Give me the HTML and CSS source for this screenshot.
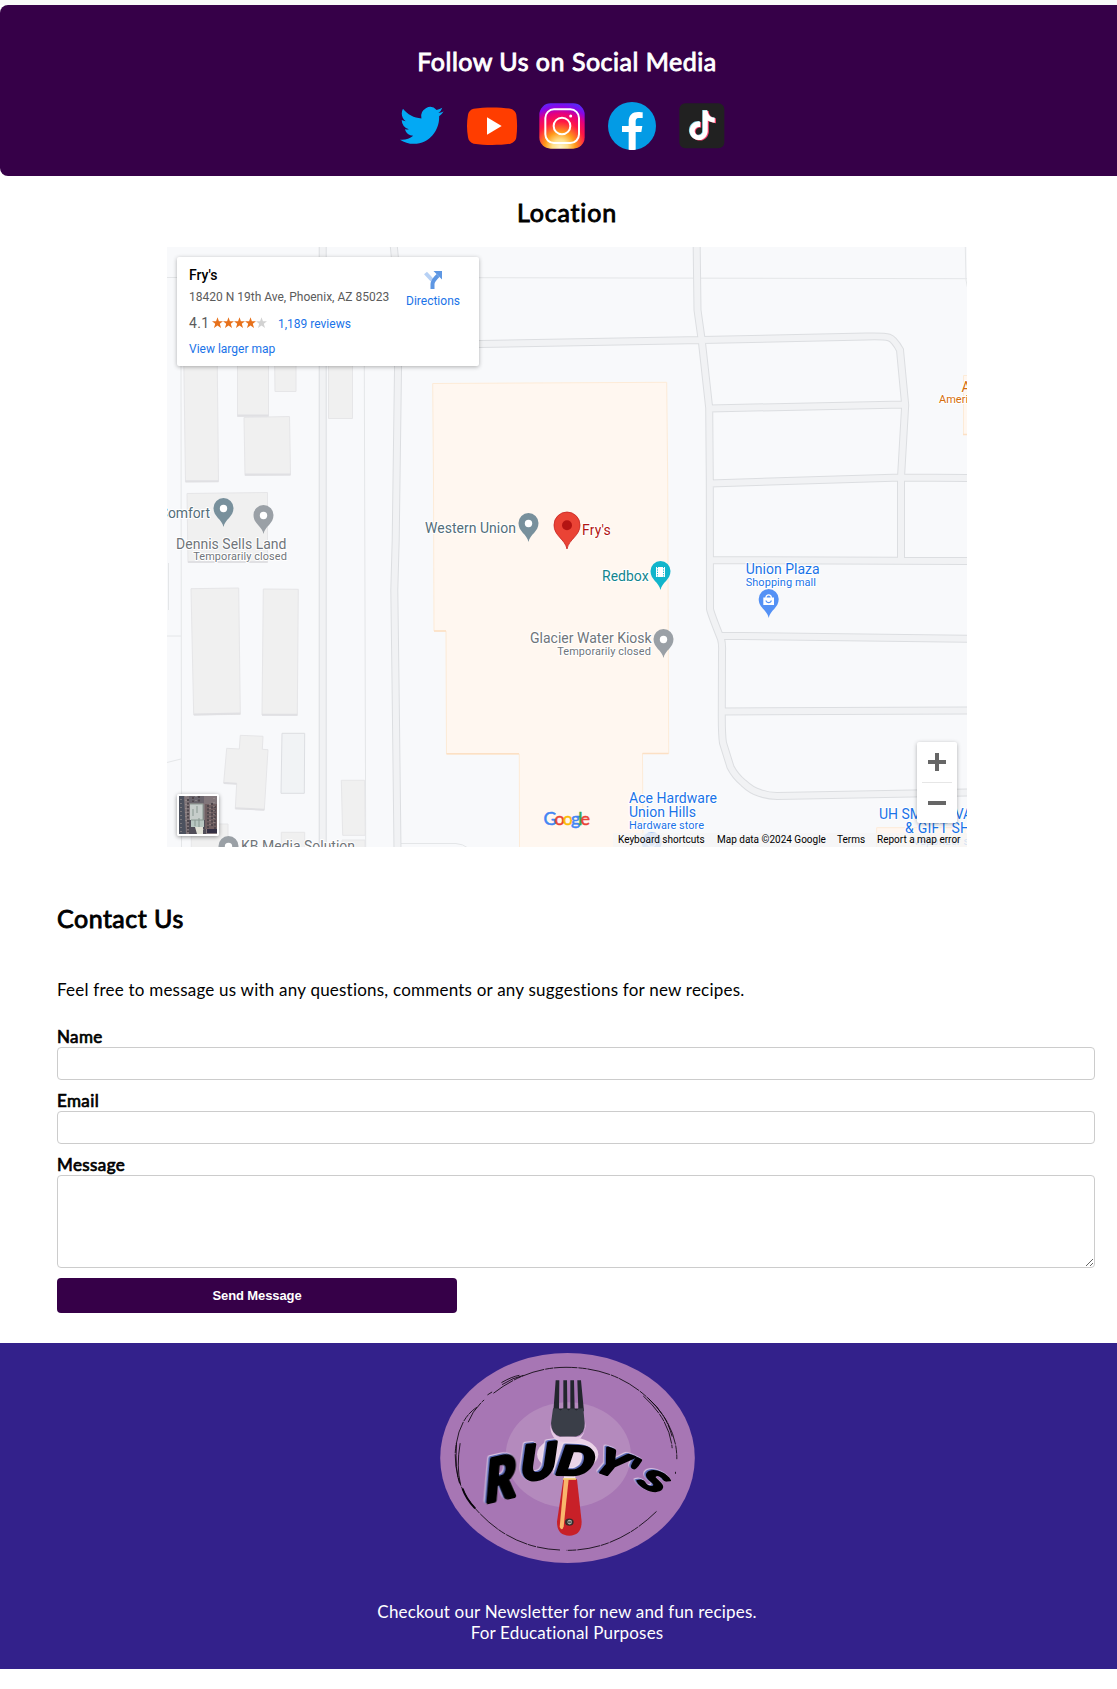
FILE: index.html
```html
<!DOCTYPE html>
<html lang="en">
<head>
<meta charset="utf-8">
<title>Rudy's</title>
<link rel="stylesheet" href="styles.css">
</head>
<body>
<div class="page">
  <section class="social">
    <h2 class="social-title"><span>Follow Us on Social Media</span></h2>
    <div class="social-icons">
      <svg viewBox="49 210 156 156"><path transform="translate(61 218.5) scale(5.450 5.65)" fill="#03a9f4" d="M23.953 4.57a10 10 0 01-2.825.775 4.958 4.958 0 002.163-2.723c-.951.555-2.005.959-3.127 1.184a4.92 4.92 0 00-8.384 4.482C7.69 8.095 4.067 6.13 1.64 3.162a4.822 4.822 0 00-.666 2.475c0 1.71.87 3.213 2.188 4.096a4.904 4.904 0 01-2.228-.616v.06a4.923 4.923 0 003.946 4.827 4.996 4.996 0 01-2.212.085 4.936 4.936 0 004.604 3.417 9.867 9.867 0 01-6.102 2.105c-.39 0-.779-.023-1.17-.067a13.995 13.995 0 007.557 2.209c9.053 0 13.998-7.496 13.998-13.985 0-.21 0-.42-.015-.63A9.935 9.935 0 0024 4.59z"/></svg>
      <svg viewBox="258 210 156 156"><path fill="#ff3d00" d="M409 322c-1 9-9 17-18 19-33 5-76 5-110 0-9-2-16-10-17-19-4-24-4-44 0-68 1-9 8-16 17-18 34-5 77-5 110 0 9 2 17 9 18 18 3 24 3 44 0 68z"/><path fill="#fff" d="M321 262v52l44-26z"/></svg>
      <svg viewBox="468 210 156 156">
        <defs>
          <radialGradient id="igWarm" cx="540" cy="352" r="142" gradientUnits="userSpaceOnUse"><stop offset="0" stop-color="#fff3c4"/><stop offset=".16" stop-color="#ffe08a"/><stop offset=".32" stop-color="#ff9b1a"/><stop offset=".55" stop-color="#ff1744"/><stop offset=".72" stop-color="#e6007e"/><stop offset=".86" stop-color="#8a06e8"/><stop offset="1" stop-color="#4a32ff"/></radialGradient>
        </defs>
        <rect x="478" y="220" width="136" height="136" rx="34" fill="url(#igWarm)"/>
        <g fill="none" stroke="#fff" stroke-width="6"><rect x="496" y="238" width="101" height="101" rx="26"/><circle cx="546" cy="288" r="25"/></g><circle cx="572" cy="258" r="4.500" fill="#fff"/>
      </svg>
      <svg viewBox="678 210 156 156"><circle cx="756" cy="288" r="72" fill="#039be5"/><path fill="#fff" d="M746 359v-53h-20v-18h20v-12c0-21 11-30 28-30 8 0 12 1 14 1v17h-11c-9 0-10 5-10 13v11h20l-3 18h-17v53c-7 1-14 1-21 0z"/></svg>
      <svg viewBox="888 210 156 156">
        <defs><path id="note" d="M12.525.02c1.31-.02 2.61-.01 3.91-.02.08 1.530.63 3.090 1.750 4.170 1.120 1.110 2.700 1.620 4.240 1.790v4.030c-1.440-.05-2.890-.35-4.200-.97-.57-.26-1.100-.59-1.620-.93-.01 2.920.01 5.840-.02 8.750-.08 1.400-.54 2.790-1.350 3.940-1.310 1.920-3.580 3.170-5.910 3.210-1.430.08-2.860-.31-4.080-1.030-2.020-1.190-3.440-3.370-3.650-5.710-.02-.5-.03-1-.01-1.490.18-1.900 1.120-3.720 2.580-4.960 1.660-1.440 3.980-2.130 6.150-1.720.02 1.480-.04 2.960-.04 4.440-.99-.32-2.150-.23-3.020.37-.63.41-1.110 1.040-1.360 1.750-.21.51-.15 1.070-.14 1.610.24 1.640 1.820 3.020 3.500 2.870 1.120-.01 2.190-.66 2.770-1.610.19-.33.4-.67.41-1.060.1-1.790.06-3.570.07-5.360.01-4.030-.01-8.050.02-12.070z"/></defs>
        <rect x="898" y="220" width="135" height="135" rx="18" fill="#212121"/>
        <use href="#note" fill="#81d4e8" transform="translate(921 240) scale(3.650 3.700)"/><use href="#note" fill="#ff4571" transform="translate(926 243) scale(3.650 3.700)"/><use href="#note" fill="#fff" transform="translate(923.500 241.500) scale(3.600 3.700)"/>
      </svg>
    </div>
  </section>

  <section class="location">
    <h2 class="location-title"><span>Location</span></h2>
    <div class="map">
      <svg class="map-canvas" viewBox="167 247 800 600">
        <defs>
          <g id="roads">
            <path d="M322.700 240V850M393.200 240L398 290V370L395.700 540 394.300 590 395.500 680 397.500 850M398 345.500L480 344 701.700 340 866 336.500Q884 336 889 337.500 894 339 900 350L905.200 405 901 477.500V560M696.600 240L697.500 310 701.700 340 709.200 408 709.800 480 710 609Q711 614 721 639 722.500 644 722 652L721.800 713Q721.700 735 723 743L730.500 767Q735 776 743.500 783 752 791 760 793 768 796 777 796L970 792.500M709.300 408.500L903.500 404.500M710 483.500L901 477.500 970 478M710 560L970 561M720 635.700L970 638.700M722 711.500L970 710.500"/>
          </g>
          <g id="pin"><path d="M0 29C-1.500 21-10 19-10 10A10 10 0 0 1 10 10C10 19 1.500 21 0 29z"/></g>
        </defs>
        <rect x="167" y="247" width="800" height="600" fill="#f8f9fb"/>
        <g fill="none" stroke="#e4e6e8">
          <path d="M167 277.500L480 277.700 967 278.700M181 366L181.500 847M364.300 366L365.700 847M167 636H181M167 762.500L181 759M168.500 563V610M400.500 843.500H456Q463 844 468 848M965.300 247L966 280 968 290"/>
        </g>
        <g class="buildings">
          <path d="M183.500 340H217L218.500 481.500 185.500 482zM237.500 350H268.500V416.500H237.500zM274.500 350H296V391.500H275zM244 417.500L289.500 416.500 290.500 475 245 475.500zM328.500 350H352.500V418.500H328.500zM187 493.500L267.500 492.500V562.500H188zM191 588.700L238.700 588 240.300 714.300 193.700 715zM263.300 589L298.300 589.300 297.300 715.300 262 715z"/>
          <path d="M240.300 735.300L263 736.300 262.300 749.300 268 749.700 264.300 810 235.300 808.700 236.700 783.700 223.700 783 226.700 748.300 239.300 749zM341.300 780.300H364.700L365.300 835.300H342.700zM281.300 832.300H304.700V850H281.300zM191.300 824H228V850H191.300zM342 840H365V850H342z"/>
          <path fill="#f1f3f5" stroke="#dcdee2" d="M282 733.300H304.700L304.300 793.300H281z"/>
          <path fill="none" stroke="#e0e0e3" stroke-width="2" d="M185.500 481.300H218.500M237.500 415.500H268.500M245 474.500H290.500M188 562H267.500M194 714.500L240.300 713.500M262 714.700H297.300M223.700 783L236.700 783.700M235.300 808.300L264.300 809.700"/>
        </g>
        <use href="#roads" fill="none" stroke="#dcdee1" stroke-width="8"/>
        <use href="#roads" fill="none" stroke="#f1f2f4" stroke-width="6"/>
        <g fill="#fff7f0" stroke="#fdebd7">
          <path d="M432.700 383.500L666.700 382.300 667.700 480 668.700 753.500H642.500L643 850H519.500L519.300 754H446.500L446 631H434L433.500 480z"/>
          <path d="M963.500 375.500H970V434.500H963.500zM876.700 827.700H970V850H876.700z"/>
          <path fill="none" stroke="#fce0c4" stroke-width="1.500" d="M446.500 753.700H519M642.500 753.500H668.500M434 631H446M963 434.500H968"/>
        </g>
        <use href="#pin" x="223.500" y="498" fill="#78909c"/><circle cx="223.500" cy="508.500" r="3.700" fill="#fff"/>
        <use href="#pin" x="263.500" y="505" fill="#9aa0a6"/><circle cx="263.500" cy="515.500" r="3.700" fill="#fff"/>
        <use href="#pin" x="528.500" y="513" fill="#78909c"/><circle cx="528.500" cy="523.500" r="3.700" fill="#fff"/>
        <use href="#pin" x="663.500" y="629" fill="#9aa0a6"/><circle cx="663.500" cy="639.500" r="3.700" fill="#fff"/>
        <use href="#pin" x="228.500" y="836" fill="#9aa0a6"/><circle cx="228.500" cy="846.500" r="3.700" fill="#fff"/>
        <use href="#pin" x="651.700" y="832" fill="#a9c6f7"/><circle cx="651.700" cy="842.500" r="4" fill="none" stroke="#e8f0fd" stroke-width="1.500"/>
        <use href="#pin" x="660.500" y="561" fill="#12b5cb"/><path d="M656 567H665V577H656z" fill="#fff"/><path d="M657.500 567V577M663.500 567V577" stroke="#12b5cb" stroke-dasharray="1.200 1.200"/>
        <use href="#pin" x="768.700" y="589" fill="#5491f5"/><path d="M763.300 597.500H774V605H763.300z" fill="#fff"/><path d="M766 598V597A2.700 2.700 0 0 1 771.300 597V598" fill="none" stroke="#fff" stroke-width="1.300"/><path d="M766 600.500A2.700 2.700 0 0 0 771.300 600.500" fill="none" stroke="#5491f5" stroke-width="1.200"/>
        <path d="M567 549C565 539 554 536 554 525A13 13 0 0 1 580 525C580 536 569 539 567 549z" fill="#ea4335" stroke="#c5221f" stroke-width=".8"/><circle cx="567" cy="525.300" r="5" fill="#b31412"/>
        <g class="labels">
          <g fill="#546e7a"><text x="159" y="518" textLength="51">Comfort</text><text x="425" y="533.300" textLength="91">Western Union</text></g>
          <g fill="#70757a"><text x="176" y="549" textLength="110.500">Dennis Sells Land</text><text class="sub" x="193.200" y="560" textLength="93.700">Temporarily closed</text><text x="241" y="850.700" textLength="114">KB Media Solution</text><text x="530" y="643" textLength="121.700">Glacier Water Kiosk</text><text class="sub" x="557.200" y="655" textLength="93.700">Temporarily closed</text></g>
          <text x="582" y="535" textLength="28.700" fill="#b31412">Fry's</text>
          <text x="602" y="581" textLength="46.600" fill="#12858e">Redbox</text>
          <g fill="#1a73e8"><text x="745.700" y="574" textLength="74">Union Plaza</text><text class="sub" x="745.700" y="586" textLength="70.300">Shopping mall</text><text x="629" y="803" textLength="88">Ace Hardware</text><text x="629" y="817" textLength="67">Union Hills</text><text class="sub" x="629" y="828.500" textLength="75">Hardware store</text><text x="879" y="819" textLength="110">UH SMOKE, VAPE</text><text x="905" y="833" textLength="84">&amp; GIFT SHOP</text><text class="sub" x="913" y="844.500" opacity=".5" textLength="76">Vaporizer store</text></g>
          <g fill="#d56e0c"><text x="961.500" y="391.700">A</text><text class="sub" x="939" y="403">American</text></g>
          <text class="google" x="543.500" y="825" textLength="46.500"><tspan class="blue">G</tspan><tspan class="red">o</tspan><tspan class="yellow">o</tspan><tspan class="blue">g</tspan><tspan class="green">l</tspan><tspan class="red">e</tspan></text>
        </g>
      </svg>
      <div class="place-card">
        <div class="place-info">
          <div class="place-name">Fry's</div>
          <div class="place-address">18420 N 19th Ave, Phoenix, AZ 85023</div>
          <div class="place-rating"><span class="score">4.1</span>
            <svg width="55" height="12" viewBox="0 0 55 12"><defs><path id="star" d="M5.500 .2L6.900 4.200H11L7.800 6.700 9 11 5.500 8.500 2 11 3.200 6.700 0 4.200H4.100z"/></defs><g fill="#e7711b"><use href="#star"/><use href="#star" x="11"/><use href="#star" x="22"/><use href="#star" x="33"/></g><use href="#star" x="44" fill="#d2d2d2"/></svg>
            <span class="link reviews">1,189 reviews</span></div>
          <div class="link larger">View larger map</div>
        </div>
        <div class="directions">
          <svg width="18" height="18" viewBox="0 0 18 18"><path d="M1.500 2L8 9" stroke="#b7d1f5" stroke-width="4"/><path d="M8.500 18V13Q8.500 10 14 4.500" fill="none" stroke="#5e97e3" stroke-width="4"/><path d="M9.500 0H18V8.500z" fill="#5e97e3"/></svg>
          <div class="link">Directions</div>
        </div>
      </div>
      <div class="satellite">
        <svg viewBox="0 0 38 38"><rect width="38" height="38" fill="#81767a"/><path fill="#4c515e" d="M0 0H5L7 38H0z"/><path fill="#69646c" d="M10 0H25V7H10z"/><path fill="#514e58" d="M10 24H27V38H10z"/><path fill="#705f61" d="M26 8H38V33H26z"/><path stroke="#4f474c" stroke-width="2" stroke-dasharray="2 1.500" d="M29 9V32M33 7V30M36 10V33M14 1V6M20 0V6M9 3V36"/><path stroke="#a49b96" stroke-dasharray="1 3" d="M2 3V36M7 0V28M31 8V32M35 2V30M17 0V6M24 25V34"/><path fill="#c6cdca" d="M11 8H24V24H11z"/><path fill="#b8c7c1" d="M12 24H25V31H12z"/><path fill="#e3e3d8" d="M16 31H24V38H18z"/><path d="M11 8H24M24 8V24M14 13V20M18 10V17M12 24H25M16 24V30M20 22V31" stroke="#899891"/><path fill="#332f42" d="M28 33H38V37H28z"/></svg>
      </div>
      <div class="zoom-control">
        <svg viewBox="0 0 40 81"><path d="M11 20H29M20 11V29M11 61H29" stroke="#666" stroke-width="4"/><path d="M5 40.500H35" stroke="#e6e6e6"/></svg>
      </div>
      <div class="credits"><span class="c1">Keyboard shortcuts</span><span class="c2">Map data ©2024 Google</span><span class="c3">Terms</span><span class="c4">Report a map error</span></div>
    </div>
  </section>

  <section class="contact">
    <h2 class="contact-title"><span>Contact Us</span></h2>
    <p class="contact-intro"><span>Feel free to message us with any questions, comments or any suggestions for new recipes.</span></p>
    <form class="form">
      <label for="name">Name</label>
      <input id="name" type="text">
      <label for="email">Email</label>
      <input id="email" type="text">
      <label for="message">Message</label>
      <textarea id="message"></textarea>
      <button type="button">Send Message</button>
    </form>
  </section>

  <footer class="footer">
    <svg class="logo" viewBox="30 39 765 631">
      <ellipse cx="412.500" cy="354.500" rx="382.500" ry="315.500" fill="#a776b4"/>
      <ellipse cx="415" cy="345" rx="188" ry="158" fill="#b48abd"/>
      <ellipse cx="413" cy="343" rx="92" ry="53" fill="#ead3e7"/>
      <g fill="none" stroke="#08050a" stroke-width="2.500">
        <path d="M190 160Q290 82 408 82 560 82 660 180 742 260 741 358M680 515Q560 632 410 632M390 631Q240 625 137 508 74 440 75 340 82 240 140 202M216 134Q250 112 282 106M214 128Q245 110 268 106M114 247Q128 210 162 180M172 165L186 156M640 168Q720 240 727 325M655 175Q708 220 727 290M737 396V402" stroke-dasharray="70 3 25 2"/>
        <path d="M90 310Q78 380 91 434M79 310Q74 390 88 430"/><path d="M97 446Q108 478 135 506" stroke-width="6"/>
      </g>
      <path fill="#e4c9e4" d="M361 255Q361 300 397 306H430Q468 298 467 244L463 275Q455 292 435 292H390Q368 285 361 255z"/>
      <path fill="#23262e" d="M377 121H388L387 206H400V121H411L412 206H421V121H432L434 206H445L442 121H453L462 214H370z"/>
      <path fill="#3a3e48" d="M369 205L385 206Q391 217 398 206H410Q416 217 421 206H432Q439 217 446 206L460 205 464 250Q465 284 438 290H390Q364 283 363 250z"/>
      <path fill="#f3dfeb" d="M402 405H436V420H402z"/>
      <path fill="#c82028" d="M400 418H441L455 545Q455 587 418 588 380 587 381 545z"/><path fill="#f9b56c" d="M402 418H416L401 560Q396 576 389 562z"/><path fill="#f4d06c" d="M399 415H438V420H399z"/>
      <ellipse cx="418" cy="547" rx="13" ry="11" fill="#332c2c"/><circle cx="419" cy="547" r="7" fill="#a8b0a8"/><path d="M414 547H424" stroke="#222" stroke-width="3"/>
      <g class="wordmark">
        <text transform="translate(168 488) rotate(-13) skewX(-12) scale(1.020 1.120)">R</text>
        <text transform="translate(272 424) rotate(-7) skewX(-8) scale(1.030 .960)">U</text>
        <text transform="translate(376 404) rotate(2) skewX(-8) scale(1.030 .80)">D</text>
        <text transform="translate(486 390) rotate(19) skewX(-12) scale(.92 .72)">Y</text>
        <text transform="translate(574 424) rotate(26) scale(.8 .76)">'</text>
        <text transform="translate(620 430) rotate(29) skewX(-8) scale(.96 .58)">S</text>
      </g>
    </svg>
    <p class="footer-text"><span class="f1">Checkout our Newsletter for new and fun recipes.</span><br><span class="f2">For Educational Purposes</span></p>
  </footer>
</div>
</body>
</html>
```
FILE: styles.css
```css
* { box-sizing: border-box; }
html { overflow: hidden; background: #fff; }
body { margin: 0; overflow: hidden; font-family: Lato, "Open Sans", sans-serif; font-size: 17px; color: #000; }
.page { width: 1134px; height: 1689px; border-top: 5px solid #f9f9f9; }
h2, p { margin: 0; }
h2 { font-size: 25px; font-weight: 400; line-height: 30px; letter-spacing: .5px; -webkit-text-stroke: .9px currentColor; }

.social { height: 171px; padding-top: 41px; background: #360048; border-radius: 8px; color: #fff; text-align: center; }
.social-icons { display: flex; justify-content: center; gap: 18px; padding-right: 10px; margin-top: 24px; }
.social-icons svg { width: 52px; height: 52px; }

.location { height: 671px; padding-top: 21px; display: flex; flex-direction: column; align-items: center; }
.location-title { height: 50px; letter-spacing: .8px; }
.map { position: relative; width: 800px; height: 600px; overflow: hidden; font-family: Roboto, sans-serif; }
.map-canvas { display: block; width: 800px; height: 600px; }
.buildings { fill: #f0f0f0; stroke: #e6e6e8; }
.labels { font-size: 14px; paint-order: stroke; stroke: #fff; stroke-width: 2px; stroke-linejoin: round; }
.labels .sub { font-size: 11px; }
.labels .google { font-family: Lato, sans-serif; font-size: 18px; font-weight: 400; stroke: none; }
.labels .google tspan { stroke-width: .5px; }
.red { fill: #ea4335; stroke: #ea4335; }
.yellow { fill: #fbbc04; stroke: #fbbc04; }
.blue { fill: #4285f4; stroke: #4285f4; }
.green { fill: #34a853; stroke: #34a853; }

.place-card { position: absolute; left: 10px; top: 10px; width: 302px; height: 109px; padding: 9px 0 0 12px; display: flex; background: #fff; border-radius: 2px; box-shadow: 0 1px 4px rgba(0,0,0,.3); font-size: 12px; color: #5b5b5b; }
.place-info { width: 205px; white-space: nowrap; }
.place-name { font-size: 14px; font-weight: 500; line-height: 18px; color: #000; }
.place-address { margin-top: 5px; line-height: 16px; }
.place-rating { display: flex; align-items: center; height: 18px; margin-top: 9px; }
.score { width: 23px; font-size: 14px; letter-spacing: .3px; }
.reviews { margin-left: 11px; padding-top: 1px; }
.link { color: #1a73e8; }
.larger { margin-top: 10px; line-height: 14px; }
.directions { width: 78px; padding-top: 5px; text-align: center; }
.directions svg { display: block; margin: 0 auto 4px 30px; }
.directions .link { line-height: 16px; }
.satellite { position: absolute; left: 10px; top: 547px; width: 42px; height: 42px; border: 2px solid #fff; border-radius: 2px; box-shadow: 0 1px 4px rgba(0,0,0,.4); }
.satellite svg { display: block; }
.zoom-control { position: absolute; left: 750px; top: 495px; width: 40px; height: 81px; background: #fff; border-radius: 2px; box-shadow: 0 1px 4px rgba(0,0,0,.3); }
.credits { position: absolute; right: 0; bottom: 0; height: 14px; display: flex; font-size: 10px; line-height: 14px; white-space: nowrap; }
.credits span { padding-left: 5px; background: rgba(245,245,245,.7); }
.c1 { width: 99px; }
.c2 { width: 120px; }
.c3 { width: 40px; }
.c4 { width: 95px; }

.contact { height: 496px; padding: 56px 0 0 57px; }
.contact-intro { margin-top: 47px; line-height: 20px; letter-spacing: .22px; }
.form { width: 1038px; margin-top: 26px; display: flex; flex-direction: column; align-items: stretch; }
.form label { height: 21px; line-height: 22px; letter-spacing: .4px; -webkit-text-stroke: .7px #000; }
.form input { height: 33px; margin: 0 0 10px; border: 1px solid #ccc; border-radius: 4px; background: #fff; }
.form textarea { height: 93px; margin: 0 0 10px; border: 1px solid #ccc; border-radius: 4px; resize: vertical; background: #fff; }
.form button { width: 400px; height: 35px; padding: 0; border: 0; border-radius: 4px; background: #360048; color: #fff; font: 700 13px "Liberation Sans", Arial, sans-serif; letter-spacing: -.1px; }

.footer { height: 326px; padding-top: 10px; background: #33218b; color: #fff; text-align: center; }
.logo { display: block; width: 255px; height: 210px; margin: 0 auto; }
.wordmark { font: italic 900 150px Lato, sans-serif; fill: #000; stroke: #000; stroke-width: 10px; stroke-linejoin: round; filter: drop-shadow(-5px -3px 0 #5967b3) drop-shadow(-2px -2px 0 #f3e6f5); }
.footer-text { margin-top: 38px; line-height: 21px; letter-spacing: .18px; }
```
